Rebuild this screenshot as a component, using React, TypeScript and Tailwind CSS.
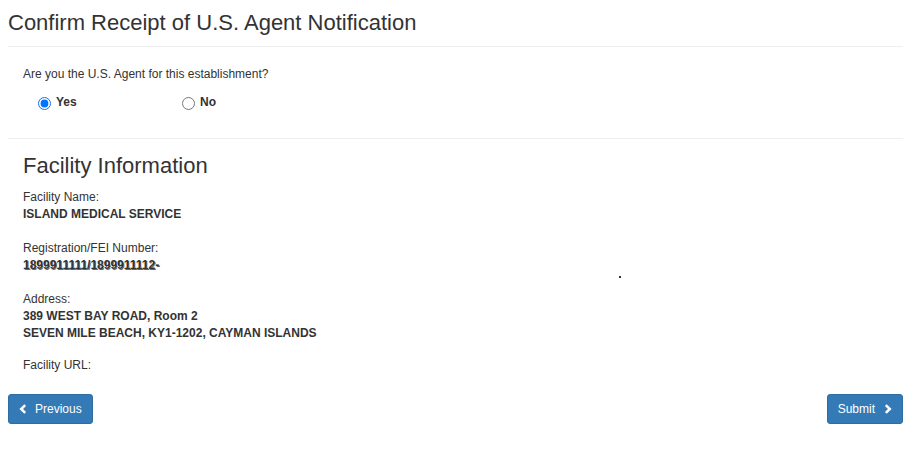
import React from "react";

function Chevron({ dir }: { dir: "left" | "right" }) {
  const d = dir === "left" ? "M6.2 1.2 L2.2 5 L6.2 8.8" : "M1.8 1.2 L5.8 5 L1.8 8.8";
  return (
    <svg width="8" height="10" viewBox="0 0 8 10" className="shrink-0">
      <path d={d} fill="none" stroke="#fff" strokeWidth="2.5" strokeLinejoin="miter" />
    </svg>
  );
}

function Field({ label, children }: { label: string; children?: React.ReactNode }) {
  return (
    <div>
      <div>{label}</div>
      {children}
    </div>
  );
}

export default function App() {
  return (
    <div className="min-h-[468px] bg-white pl-2 font-['Liberation_Sans',Arial,sans-serif] text-[12px] leading-[17px] text-[#333]">
      <h3 className="pt-[11px] text-[22px] leading-[24px] font-normal">
        Confirm Receipt of U.S. Agent Notification
      </h3>
      <div className="mt-[11px] h-px bg-[#eee]" />

      <div className="pl-[15px]">
        <div className="mt-[19px]">Are you the U.S. Agent for this establishment?</div>
        <div className="mt-[11px] flex pl-[15px]">
          <label className="flex w-[144px] items-center gap-[5px] font-bold">
            <input type="radio" name="agent" defaultChecked className="m-0 mt-px h-[13px] w-[13px]" />
            Yes
          </label>
          <label className="flex items-center gap-[5px] font-bold">
            <input type="radio" name="agent" className="m-0 mt-px h-[13px] w-[13px]" />
            No
          </label>
        </div>
      </div>
      <div className="mt-[27px] h-px bg-[#eee]" />

      <div className="pl-[15px]">
        <h3 className="mt-[15px] text-[22px] leading-[24px] font-normal">Facility Information</h3>
        <div className="mt-[11px] flex flex-col">
          <Field label="Facility Name:">
            <div className="font-bold">ISLAND MEDICAL SERVICE</div>
          </Field>
          <div className="h-[17px]" />
          <Field label="Registration/FEI Number:">
            <div className="font-bold [text-shadow:-1px_0_0_#fff,1px_1px_0_#666]">
              1899911111/1899911112-
            </div>
          </Field>
          <div className="h-[17px]">
            <div className="ml-[596px] mt-[2px] h-[2px] w-[2px] bg-[#333]" />
          </div>
          <Field label="Address:">
            <div className="font-bold">389 WEST BAY ROAD, Room 2</div>
            <div className="font-bold">SEVEN MILE BEACH, KY1-1202, CAYMAN ISLANDS</div>
          </Field>
          <div className="h-[15px]" />
          <Field label="Facility URL:" />
        </div>
      </div>

      <div className="mt-[20px] flex justify-between">
        <button className="flex h-[30px] items-center rounded-[3px] border border-[#2e6da4] bg-[#337ab7] px-[10px] text-[12px] text-white">
          <Chevron dir="left" />
          <span className="ml-[8px]">Previous</span>
        </button>
        <button className="flex h-[30px] items-center rounded-[3px] border border-[#2e6da4] bg-[#337ab7] px-[10px] text-[12px] text-white">
          <span className="mr-[9px]">Submit</span>
          <Chevron dir="right" />
        </button>
      </div>
    </div>
  );
}
